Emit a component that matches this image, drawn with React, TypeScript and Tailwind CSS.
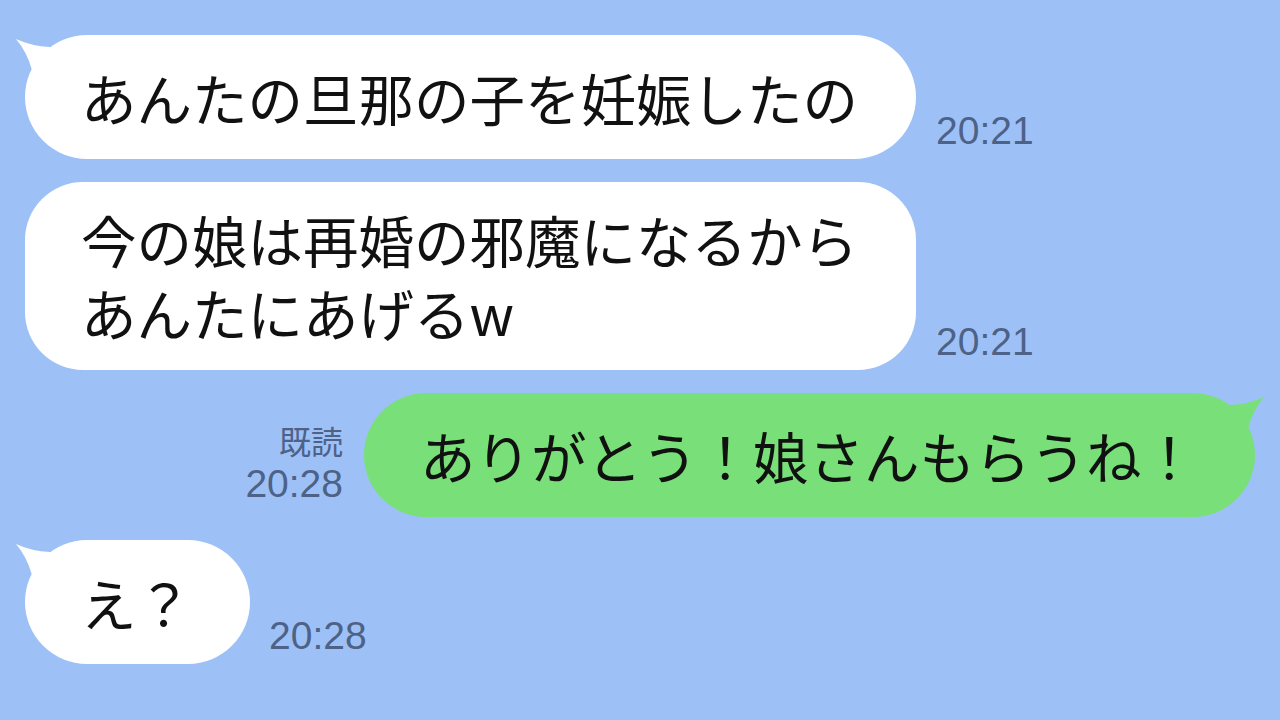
import React from 'react'

const jp = '"Noto Sans CJK JP", "Noto Sans", sans-serif'
const num = '"Liberation Sans", Arial, sans-serif'

// tail drawn at the top-left corner of a bubble; mirrored for the right side
function Tail({ color, right = false }: { color: string; right?: boolean }) {
  return (
    <svg
      className={`absolute top-0 w-[50px] h-[40px] ${right ? '-right-[10px] scale-x-[-1]' : '-left-[10px]'}`}
      viewBox="-10 0 50 40"
    >
      <path d="M25 12 Q6 11 -9 4 Q2 17 7 35 L35 35 Z" fill={color} />
    </svg>
  )
}

function Time({ children, className = '' }: { children: React.ReactNode; className?: string }) {
  return (
    <span className={`text-[39px] leading-none text-[#4d6286] ${className}`} style={{ fontFamily: num }}>
      {children}
    </span>
  )
}

const bubbleText = 'text-[55.5px] leading-[73px] font-normal text-[#111] whitespace-nowrap'

export default function App() {
  return (
    <div
      className="w-[1280px] h-[720px] overflow-hidden bg-[#9dc1f6] pt-[35px] flex flex-col gap-[23px]"
      style={{ fontFamily: jp }}
    >
      {/* message 1 */}
      <div className="flex items-end gap-[20px] pl-[25px]">
        <div className="relative">
          <Tail color="#ffffff" />
          <div className={`relative bg-white rounded-full h-[124px] pl-[56px] pr-[58px] flex items-center ${bubbleText}`}>
            あんたの旦那の子を妊娠したの
          </div>
        </div>
        <Time className="mb-[9px]">20:21</Time>
      </div>

      {/* message 2 */}
      <div className="flex items-end gap-[20px] pl-[25px]">
        <div className={`bg-white rounded-[58px] h-[188px] pl-[56px] pr-[58px] flex flex-col justify-center ${bubbleText}`}>
          <span>今の娘は再婚の邪魔になるから</span>
          <span>あんたにあげるw</span>
        </div>
        <Time className="mb-[9px]">20:21</Time>
      </div>

      {/* my reply */}
      <div className="flex items-end justify-end gap-[21px] pr-[25px]">
        <div className="flex flex-col items-end gap-[6px] mb-[14px]">
          <span className="text-[32px] leading-[36px] text-[#4d6286]">既読</span>
          <Time>20:28</Time>
        </div>
        <div className="relative">
          <Tail color="#79df78" right />
          <div className={`relative bg-[#79df78] rounded-full h-[124px] pl-[56px] pr-[58px] flex items-center ${bubbleText}`}>
            ありがとう！娘さんもらうね！
          </div>
        </div>
      </div>

      {/* message 3 */}
      <div className="flex items-end gap-[19px] pl-[25px]">
        <div className="relative">
          <Tail color="#ffffff" />
          <div className={`relative bg-white rounded-full h-[124px] pl-[56px] pr-[58px] flex items-center ${bubbleText}`}>
            え？
          </div>
        </div>
        <Time className="mb-[9px]">20:28</Time>
      </div>
    </div>
  )
}
